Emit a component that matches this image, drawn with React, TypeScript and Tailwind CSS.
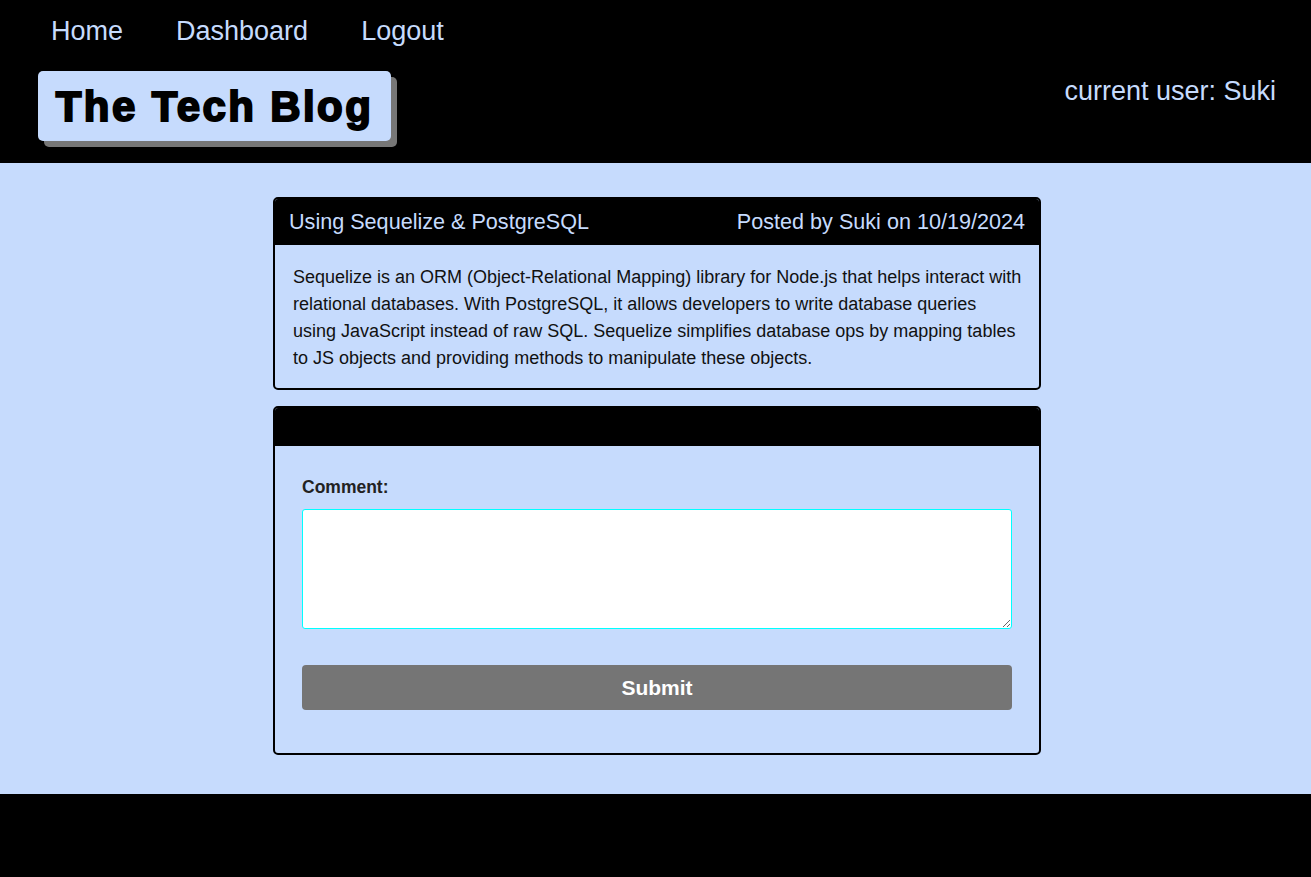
export default function App() {
  const links = ["Home", "Dashboard", "Logout"];

  return (
    <div className="min-h-screen flex flex-col bg-black font-['Liberation_Sans',Arial,sans-serif]">
      {/* Header */}
      <header className="h-[163px] bg-black text-[#c6dbfd] px-[38px] flex justify-between">
        <div className="flex flex-col">
          <nav className="flex gap-[53px] pl-[13px] pt-[14px] text-[27px] leading-[34px]">
            {links.map((l) => (
              <a key={l} href="#" className="text-[#c6dbfd]">
                {l}
              </a>
            ))}
          </nav>
          <div className="mt-[23px] w-[353px] h-[70px] rounded-[5px] bg-[#c6dbfd] shadow-[6px_6px_0_#777777] flex items-center justify-center">
            <h1 className="text-[42px] font-bold tracking-[2.4px] text-black [-webkit-text-stroke:2px_black]">
              The Tech Blog
            </h1>
          </div>
        </div>
        <div className="pt-[74px] text-[27px] leading-[34px] mr-[-3px]">
          current user: Suki
        </div>
      </header>

      {/* Main */}
      <main className="bg-[#c6dbfd] pt-[34px] pb-[39px] pl-[3px] flex flex-col items-center gap-4">
        <article className="w-[768px] border-2 border-black rounded-[5px] overflow-hidden">
          <div className="h-[46px] bg-black text-[#c6dbfd] flex items-center justify-between px-[14px] text-[21.6px]">
            <span>Using Sequelize &amp; PostgreSQL</span>
            <span>Posted by Suki on 10/19/2024</span>
          </div>
          <p className="pl-[18px] pr-[10px] pt-[19px] pb-[16px] text-[18px] leading-[27px] text-[#111111] whitespace-nowrap">
            Sequelize is an ORM (Object-Relational Mapping) library for Node.js that helps interact with
            <br />
            relational databases. With PostgreSQL, it allows developers to write database queries
            <br />
            using JavaScript instead of raw SQL. Sequelize simplifies database ops by mapping tables
            <br />
            to JS objects and providing methods to manipulate these objects.
          </p>
        </article>

        <section className="w-[768px] border-2 border-black rounded-[5px] overflow-hidden">
          <div className="h-[38px] bg-black" />
          <form className="px-[27px] pt-[31px] pb-[43px] flex flex-col">
            <label className="text-[17.5px] font-bold text-[#222222] leading-[20px] mb-[12px]">
              Comment:
            </label>
            <textarea className="h-[120px] w-full bg-white border border-[#00ffff] rounded-[3px] resize-y outline-none" />
            <button
              type="button"
              className="mt-[36px] h-[45px] w-full rounded-[4px] bg-[#757575] text-white font-bold text-[21px]"
            >
              Submit
            </button>
          </form>
        </section>
      </main>

      {/* Footer */}
      <footer className="flex-1 bg-black min-h-[83px]" />
    </div>
  );
}
